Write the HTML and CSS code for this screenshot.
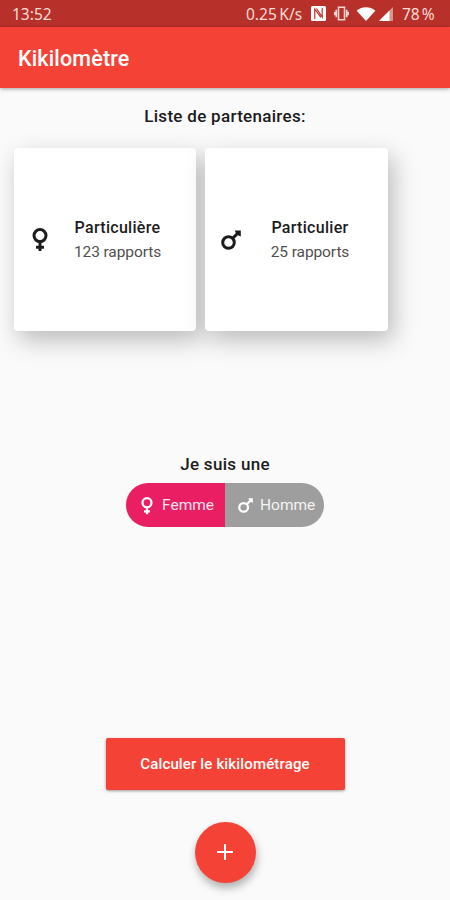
FILE: index.html
```html
<!DOCTYPE html>
<html lang="fr">
<head>
    <meta charset="UTF-8">
    <meta name="viewport" content="width=device-width, initial-scale=1">
    <title>Kikilomètre</title>
    <link rel="stylesheet" href="styles.css">
</head>
<body>
    <svg class="symbols" aria-hidden="true">
        <symbol id="female" viewBox="0 0 16 24">
            <g fill="none" stroke="currentColor" stroke-width="3">
                <circle cx="8" cy="7.6" r="6"/>
                <path d="M8 13.5v9.5M4 19.3h8"/>
            </g>
        </symbol>
        <symbol id="male" viewBox="0 0 20 20">
            <g fill="none" stroke="currentColor" stroke-width="3">
                <circle cx="7.5" cy="12.5" r="5.8"/>
                <path d="M11.6 8.4L17 3"/>
            </g>
            <path fill="currentColor" d="M13.8 .4h6v6l-3-1.2-1.8-1.8z"/>
        </symbol>
    </svg>

    <div class="status-bar">
        <span class="clock">13:52</span>
        <span class="speed">0.25 K/s</span>
        <svg class="nfc" viewBox="0 0 15 15">
            <rect width="15" height="15" rx="1.5" fill="#fff"/>
            <path fill="none" stroke="#b7312a" stroke-width="1.2" d="M3.8 13V3l6 8.300M5.500 2.500l5.700 8.500V2"/>
        </svg>
        <svg class="vibrate" viewBox="0 0 15 15">
            <path fill="none" stroke="#f6d5d0" stroke-width="1.6" d="M4.5 1.3h6v12.4h-6zM2.3 3.8v7.4M12.7 3.8v7.4M.7 5.8v3.4M14.3 5.8v3.4"/>
        </svg>
        <svg class="wifi" viewBox="0 0 20 15">
            <path fill="#fff" d="M0 4C5.5-.8 14.5-.8 20 4L10 15z"/>
        </svg>
        <svg class="signal" viewBox="0 0 14 14">
            <path fill="#d9958f" d="M14 0v14H0z"/>
            <path fill="#fff" d="M10.5 3.5V14H0z"/>
        </svg>
        <span class="battery">78 %</span>
    </div>

    <header class="app-bar">
        <h1>Kikilomètre</h1>
    </header>

    <main>
        <h2 class="list-title">Liste de partenaires:</h2>
        <div class="partners">
            <div class="card">
                <svg class="icon-female"><use href="#female"/></svg>
                <div class="info">
                    <p class="name">Particulière</p>
                    <p class="count">123 rapports</p>
                </div>
            </div>
            <div class="card">
                <svg class="icon-male"><use href="#male"/></svg>
                <div class="info">
                    <p class="name">Particulier</p>
                    <p class="count">25 rapports</p>
                </div>
            </div>
        </div>

        <p class="gender-title">Je suis une</p>
        <div class="gender">
            <button class="choice selected"><svg class="icon-female"><use href="#female"/></svg>Femme</button>
            <button class="choice"><svg class="icon-male"><use href="#male"/></svg>Homme</button>
        </div>

        <button class="calculate">Calculer le kikilométrage</button>
        <button class="add" aria-label="Ajouter">
            <svg viewBox="0 0 16 16"><path fill="none" stroke="#fff" stroke-width="2" d="M8 0v16M0 8h16"/></svg>
        </button>
    </main>
</body>
</html>
```
FILE: styles.css
```css
* { box-sizing: border-box; }
body {
    font-family: Roboto, sans-serif;
    margin: 0;
    height: 900px;
    overflow: hidden;
    background-color: #fafafa;
    color: #1c1c1c;
}
h1, h2, p {
    margin: 0;
}
button {
    padding: 0;
    border: none;
    font-family: inherit;
    color: #fff;
    cursor: pointer;
}
svg {
    display: block;
    flex: none;
}
.symbols {
    display: none;
}
.status-bar {
    display: flex;
    align-items: center;
    height: 27px;
    padding: 0 14px 0 12px;
    background-color: #b7312a;
    color: #fbdcd6;
    font-family: "Noto Sans", sans-serif;
    font-size: 15.5px;
    white-space: nowrap;
}
.clock {
    flex: 1;
}
.speed {
    width: 58px;
    word-spacing: -1.5px;
}
.nfc {
    width: 15px;
    height: 15px;
    margin-left: 7px;
}
.vibrate {
    width: 15px;
    height: 15px;
    margin-left: 8px;
}
.wifi {
    width: 20px;
    height: 14px;
    margin-left: 7px;
}
.signal {
    width: 14px;
    height: 14px;
    margin-left: 3px;
}
.battery {
    width: 34px;
    margin-left: 9px;
    word-spacing: -2px;
}
.app-bar {
    display: flex;
    align-items: center;
    height: 61px;
    padding: 1px 18px 0;
    background-color: #f44336;
    color: #fff;
    box-shadow: 0 1px 4px rgba(0,0,0,0.35);
}
.app-bar h1 {
    font-size: 21.5px;
    font-weight: 500;
    letter-spacing: 0.15px;
}
main {
    display: flex;
    flex-direction: column;
    align-items: center;
}
.list-title {
    margin-top: 17px;
    font-size: 17px;
    line-height: 22px;
    font-weight: 500;
    letter-spacing: 0.3px;
}
.partners {
    display: flex;
    align-self: flex-start;
    gap: 9px;
    margin: 21px 0 0 13.5px;
}
.card {
    display: flex;
    align-items: center;
    width: 182.5px;
    height: 182.5px;
    padding-top: 2px;
    border-radius: 4px;
    background-color: #fff;
    box-shadow: 5px 9px 24px rgba(0,0,0,0.26);
}
.card .icon-female {
    width: 16px;
    height: 24px;
    margin-left: 18px;
}
.card .icon-male {
    width: 20px;
    height: 20px;
    margin-left: 16px;
}
.info {
    flex: 1;
    padding-right: 8.5px;
    text-align: center;
}
.name {
    font-size: 16px;
    line-height: 24px;
    font-weight: 500;
    letter-spacing: 0.3px;
}
.count {
    font-size: 15.5px;
    line-height: 24px;
    letter-spacing: -0.1px;
    color: #505050;
}
.gender-title {
    margin-top: 122px;
    font-size: 17px;
    line-height: 22px;
    font-weight: 500;
    letter-spacing: 0.3px;
}
.gender {
    display: flex;
    width: 198px;
    height: 44px;
    margin-top: 8px;
    border-radius: 22px;
    overflow: hidden;
}
.choice {
    display: flex;
    flex: 1;
    align-items: center;
    background-color: #9e9e9e;
    color: #f3f3f3;
    font-size: 15.5px;
}
.choice.selected {
    background-color: #e91e63;
    color: #fde4ec;
}
.choice svg {
    color: #fff;
}
.choice .icon-female {
    width: 12px;
    height: 18px;
    margin: 2px 9px 0 15px;
}
.choice .icon-male {
    width: 15px;
    height: 15px;
    margin: 2px 7px 0 13px;
}
.calculate {
    width: 239px;
    height: 52px;
    margin-top: 211px;
    padding-top: 1px;
    border-radius: 2px;
    background-color: #f44336;
    font-size: 15px;
    font-weight: 500;
    letter-spacing: 0.15px;
    box-shadow: 0 1px 3px rgba(0,0,0,0.4);
}
.add {
    display: flex;
    align-items: center;
    justify-content: center;
    width: 61px;
    height: 61px;
    margin-top: 32px;
    border-radius: 50%;
    background-color: #f44336;
    box-shadow: 1px 5px 9px rgba(0,0,0,0.3);
}
.add svg {
    width: 16px;
    height: 16px;
}
```
